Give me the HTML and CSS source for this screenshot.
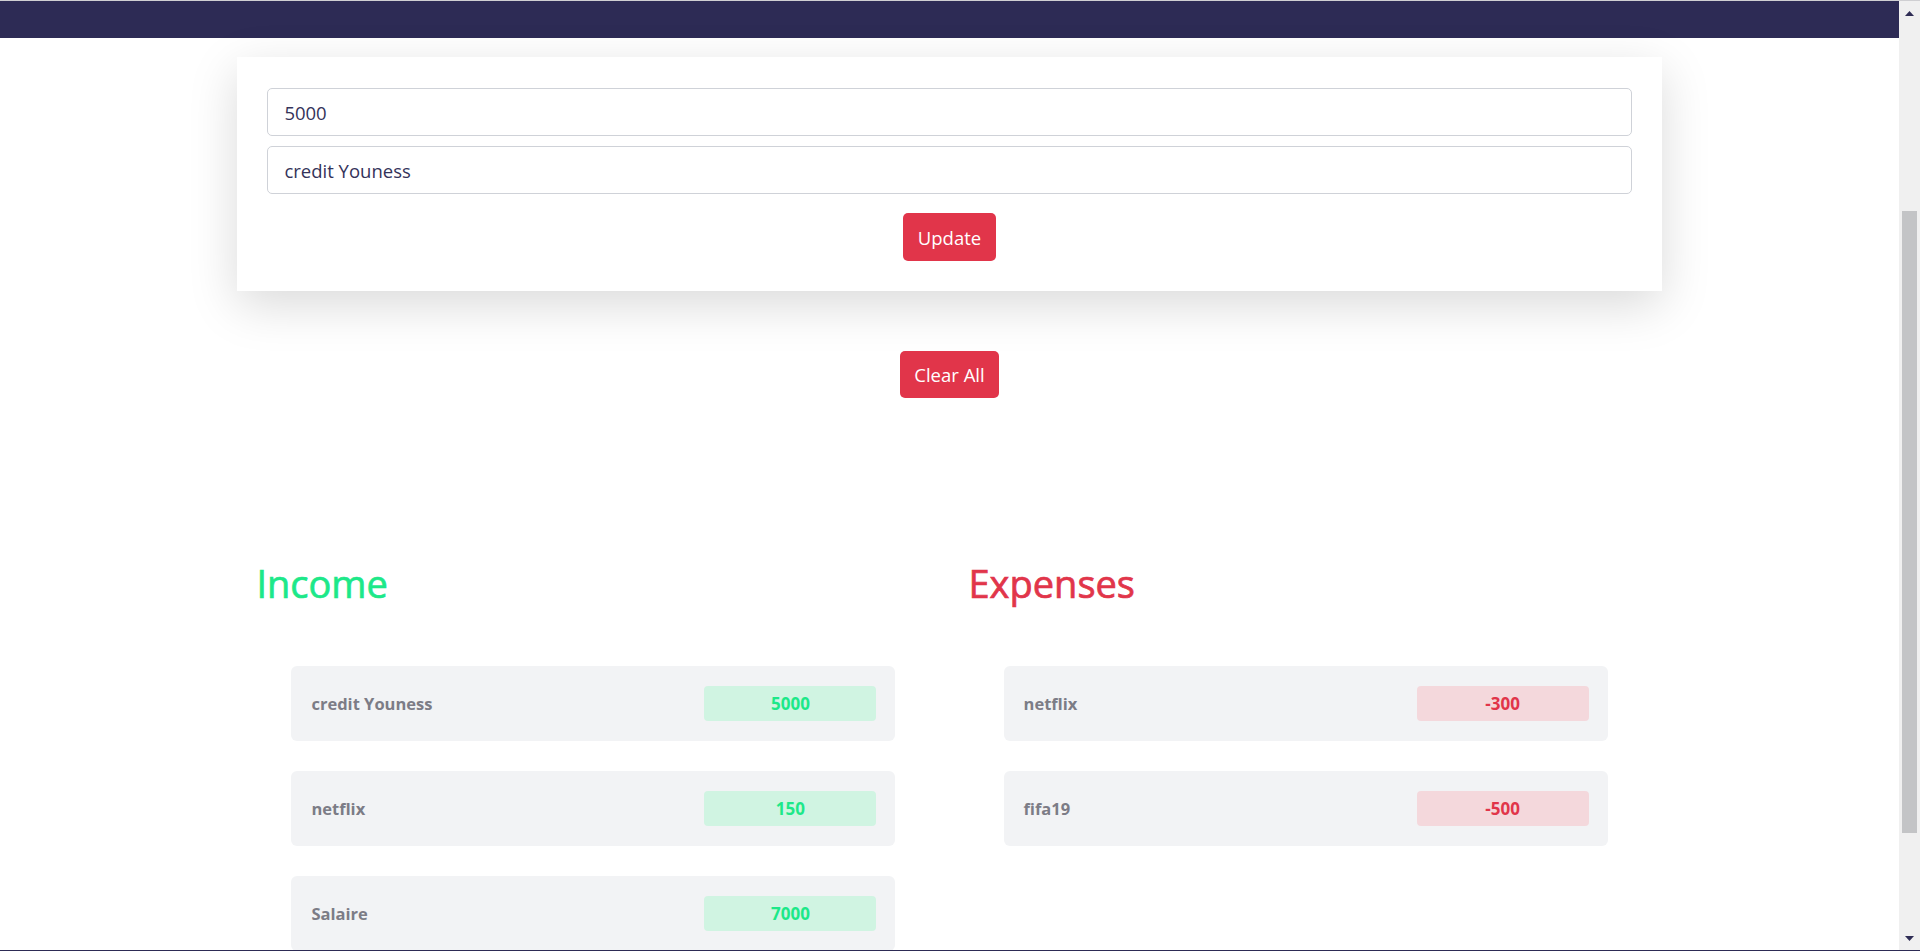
FILE: index.html
```html
<!DOCTYPE html>
<html lang="en">
<head>
<meta charset="utf-8">
<title>Budget</title>
<link rel="stylesheet" href="styles.css">
</head>
<body>
<div class="window">
  <div class="page">
    <nav class="navbar"></nav>
    <main class="content">
      <section class="form-card">
        <input class="field" type="text" value="5000">
        <input class="field" type="text" value="credit Youness">
        <div class="actions">
          <button class="btn">Update</button>
        </div>
      </section>
      <div class="clear-row">
        <button class="btn btn-clear">Clear All</button>
      </div>
      <section class="summary">
        <div class="col">
          <h2 class="col-title income">Income</h2>
          <ul class="entries">
            <li class="entry"><span class="entry-name">credit Youness</span><span class="badge badge-income">5000</span></li>
            <li class="entry"><span class="entry-name">netflix</span><span class="badge badge-income">150</span></li>
            <li class="entry"><span class="entry-name">Salaire</span><span class="badge badge-income">7000</span></li>
          </ul>
        </div>
        <div class="col">
          <h2 class="col-title expense">Expenses</h2>
          <ul class="entries">
            <li class="entry"><span class="entry-name">netflix</span><span class="badge badge-expense">-300</span></li>
            <li class="entry"><span class="entry-name">fifa19</span><span class="badge badge-expense">-500</span></li>
          </ul>
        </div>
      </section>
    </main>
  </div>
  <div class="scrollbar">
    <div class="sb-btn">
      <svg width="9" height="5" viewBox="0 0 9 5"><path d="M4.5 0L9 5H0z" fill="#2f2d55"/></svg>
    </div>
    <div class="sb-track"><div class="sb-thumb"></div></div>
    <div class="sb-btn">
      <svg width="9" height="5" viewBox="0 0 9 5"><path d="M0 0H9L4.5 5z" fill="#2f2d55"/></svg>
    </div>
  </div>
</div>
</body>
</html>
```

FILE: styles.css
```css
* { box-sizing: border-box; }

html, body {
  margin: 0;
  padding: 0;
  height: 100%;
  overflow: hidden;
}

body {
  font-family: "Open Sans", "Noto Sans", sans-serif;
  background: #ffffff;
  border-top: 1px solid #cfcfd2;
  border-bottom: 1px solid #2d2b55;
}

.window {
  display: flex;
  height: 949px;
}

.page {
  flex: 1;
  min-width: 0;
  overflow: hidden;
}

.navbar {
  height: 37px;
  background: #2d2b55;
}

.content {
  display: flex;
  flex-direction: column;
}

.form-card {
  width: 75%;
  margin: 19px auto 0;
  background: #fff;
  padding: 31px 30px 30px;
  box-shadow: 0 14px 46px rgba(0, 0, 0, 0.15);
  display: flex;
  flex-direction: column;
  gap: 10px;
}

.field {
  display: block;
  width: 100%;
  height: 48px;
  padding: 0 16px;
  font-family: inherit;
  font-size: 18.5px;
  color: #34335a;
  border: 1px solid #cfd2d8;
  border-radius: 5px;
  background: #fff;
  outline: none;
}

.actions {
  display: flex;
  justify-content: center;
  margin-top: 9px;
}

.btn {
  height: 48px;
  padding: 0 15px;
  font-family: inherit;
  font-size: 18.5px;
  color: #fff;
  background: #e1354a;
  border: none;
  border-radius: 5px;
  cursor: pointer;
}

.clear-row {
  display: flex;
  justify-content: center;
  margin-top: 60px;
}

.btn-clear {
  height: 47px;
  padding: 0 14px;
}

.summary {
  width: 75%;
  margin: 161px auto 0;
  display: grid;
  grid-template-columns: 1fr 1fr;
}

.col-title {
  margin: 0;
  padding-left: 19px;
  font-size: 38px;
  line-height: 48px;
  font-weight: 400;
  -webkit-text-stroke: 0.7px currentColor;
}

.income { color: #1de889; }
.expense { color: #e1354a; }

.entries {
  list-style: none;
  margin: 59px auto 0;
  padding: 0;
  width: 604px;
  display: flex;
  flex-direction: column;
  gap: 30px;
}

.entry {
  height: 75px;
  padding: 0 19px 0 20px;
  background: #f2f3f5;
  border-radius: 6px;
  display: flex;
  align-items: center;
  justify-content: space-between;
}

.entry-name {
  font-size: 16.5px;
  font-weight: 700;
  color: #7c7c86;
}

.badge {
  width: 172px;
  height: 35px;
  border-radius: 4px;
  display: flex;
  align-items: center;
  justify-content: center;
  font-size: 17px;
  font-weight: 700;
}

.badge-income {
  background: #d0f4e2;
  color: #1de889;
}

.badge-expense {
  background: #f4d8dc;
  color: #e1354a;
}

.scrollbar {
  width: 21px;
  background: #f0f0f0;
  display: flex;
  flex-direction: column;
}

.sb-btn {
  height: 24px;
  display: flex;
  align-items: center;
  justify-content: center;
}

.sb-track {
  flex: 1;
  padding: 0 3px;
}

.sb-thumb {
  margin-top: 186px;
  height: 622px;
  background: #c3c4c6;
}
```
